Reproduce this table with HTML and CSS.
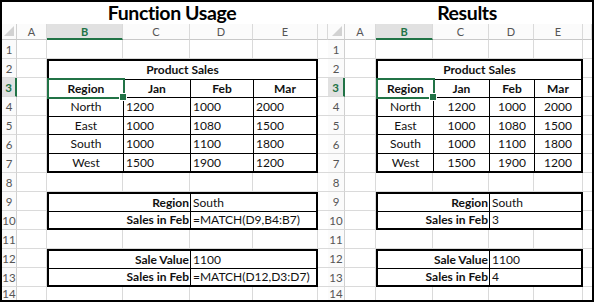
FILE: index.html
```html
<!DOCTYPE html>
<html>
<head>
<meta charset="utf-8">
<link rel="stylesheet" href="styles.css">
</head>
<body>
<div class="frame">
  <section class="panel panel-left">
    <h2 class="title">Function Usage</h2>
    <div class="sheet">
      <div class="corner"><svg width="10" height="10" viewBox="0 0 10 10"><polygon points="10,0 10,10 0,10" fill="#d2d2d2"/></svg></div>
      <div class="colheads">
        <div class="ch">A</div><div class="ch active">B</div><div class="ch">C</div><div class="ch">D</div><div class="ch">E</div><div class="ch"></div>
      </div>
      <div class="rowheads">
        <div class="rh">1</div><div class="rh">2</div><div class="rh active">3</div><div class="rh">4</div><div class="rh">5</div><div class="rh">6</div><div class="rh">7</div><div class="rh">8</div><div class="rh">9</div><div class="rh">10</div><div class="rh">11</div><div class="rh">12</div><div class="rh">13</div><div class="rh last">14</div>
      </div>
      <div class="body">
        <div class="tbl product">
          <div class="c th span-all">Product Sales</div>
          <div class="c th sel">Region</div><div class="c th">Jan</div><div class="c th">Feb</div><div class="c th">Mar</div>
          <div class="c ctr">North</div><div class="c num">1200</div><div class="c num">1000</div><div class="c num">2000</div>
          <div class="c ctr">East</div><div class="c num">1000</div><div class="c num">1080</div><div class="c num">1500</div>
          <div class="c ctr">South</div><div class="c num">1000</div><div class="c num">1100</div><div class="c num">1800</div>
          <div class="c ctr">West</div><div class="c num">1500</div><div class="c num">1900</div><div class="c num">1200</div>
        </div>
        <div class="tbl lookup lookup-a">
          <div class="c lbl">Region</div><div class="c val">South</div>
          <div class="c lbl">Sales in Feb</div><div class="c val">=MATCH(D9,B4:B7)</div>
        </div>
        <div class="tbl lookup lookup-b">
          <div class="c lbl">Sale Value</div><div class="c val">1100</div>
          <div class="c lbl">Sales in Feb</div><div class="c val">=MATCH(D12,D3:D7)</div>
        </div>
      </div>
    </div>
  </section>
  <section class="panel panel-right">
    <h2 class="title">Results</h2>
    <div class="sheet">
      <div class="corner"><svg width="10" height="10" viewBox="0 0 10 10"><polygon points="10,0 10,10 0,10" fill="#d2d2d2"/></svg></div>
      <div class="colheads">
        <div class="ch">A</div><div class="ch active">B</div><div class="ch">C</div><div class="ch">D</div><div class="ch">E</div><div class="ch"></div>
      </div>
      <div class="rowheads">
        <div class="rh">1</div><div class="rh">2</div><div class="rh active">3</div><div class="rh">4</div><div class="rh">5</div><div class="rh">6</div><div class="rh">7</div><div class="rh">8</div><div class="rh">9</div><div class="rh">10</div><div class="rh">11</div><div class="rh">12</div><div class="rh">13</div><div class="rh last">14</div>
      </div>
      <div class="body">
        <div class="tbl product">
          <div class="c th span-all">Product Sales</div>
          <div class="c th sel">Region</div><div class="c th">Jan</div><div class="c th">Feb</div><div class="c th">Mar</div>
          <div class="c ctr">North</div><div class="c ctr">1200</div><div class="c ctr">1000</div><div class="c ctr">2000</div>
          <div class="c ctr">East</div><div class="c ctr">1000</div><div class="c ctr">1080</div><div class="c ctr">1500</div>
          <div class="c ctr">South</div><div class="c ctr">1000</div><div class="c ctr">1100</div><div class="c ctr">1800</div>
          <div class="c ctr">West</div><div class="c ctr">1500</div><div class="c ctr">1900</div><div class="c ctr">1200</div>
        </div>
        <div class="tbl lookup lookup-a">
          <div class="c lbl">Region</div><div class="c val">South</div>
          <div class="c lbl">Sales in Feb</div><div class="c val">3</div>
        </div>
        <div class="tbl lookup lookup-b">
          <div class="c lbl">Sale Value</div><div class="c val">1100</div>
          <div class="c lbl">Sales in Feb</div><div class="c val">4</div>
        </div>
      </div>
    </div>
  </section>
</div>
</body>
</html>
```

FILE: styles.css
```css
* { box-sizing: border-box; }
html, body { margin: 0; padding: 0; background: #fff; }
body { font-family: Lato, "Open Sans", sans-serif; color: #000; }

.frame {
  width: 594px;
  height: 302px;
  border: 2px solid #000;
  display: flex;
  overflow: hidden;
  background: #fff;
}

.panel { display: flex; flex-direction: column; }
.panel-left { width: 326px; flex: none; }
.panel-right { flex: 1; min-width: 0; }

.title {
  margin: 0;
  height: 23px;
  line-height: 22px;
  font-size: 19.5px;
  font-weight: 700;
  text-align: center;
  padding-left: 14px;
  letter-spacing: -0.4px;
}

.sheet {
  flex: 1;
  display: grid;
  grid-template-rows: 16px 1fr;
}
.panel-left .sheet { grid-template-columns: 15px 1fr; }
.panel-right .sheet { grid-template-columns: 17px 1fr; }

.corner {
  background: #fbfbfb;
  border-right: 1px solid #d0d0d0;
  border-bottom: 1px solid #c8c8c8;
  display: flex;
  align-items: flex-end;
  justify-content: flex-end;
  padding: 0 2px 3px 0;
}
.corner svg { display: block; }

.colheads {
  display: grid;
  background: #fbfbfb;
}
.panel-left .colheads, .panel-left .body { grid-template-columns: 30px 76px 67px 63px 65px 1fr; }
.panel-right .colheads, .panel-right .body { grid-template-columns: 31px 57px 56px 45px 49px 1fr; }

.ch {
  border-right: 1px solid #dadada;
  border-bottom: 1px solid #c8c8c8;
  font-size: 11px;
  color: #555;
  display: flex;
  align-items: center;
  justify-content: center;
}
.ch.active {
  background: #e1e1e1;
  color: #217346;
  font-weight: 700;
  border-bottom: 2px solid #217346;
}

.rowheads {
  display: flex;
  flex-direction: column;
  background: #fbfbfb;
}
.rh {
  height: 19px;
  flex: none;
  border-right: 1px solid #d0d0d0;
  border-bottom: 1px solid #dadada;
  font-size: 11.5px;
  color: #555;
  display: flex;
  align-items: center;
  justify-content: center;
}
.rh.last { flex: 1; height: auto; border-bottom: none; }
.rh.active {
  background: #e1e1e1;
  color: #217346;
  font-weight: 700;
  border-right: 2px solid #217346;
}

.body {
  display: grid;
  grid-template-rows: repeat(13, 19px) 1fr;
}
.panel-left .body {
  background-image:
    linear-gradient(#dadada, #dadada), linear-gradient(#dadada, #dadada), linear-gradient(#dadada, #dadada),
    linear-gradient(#dadada, #dadada), linear-gradient(#dadada, #dadada),
    repeating-linear-gradient(to bottom, transparent 0 18px, #dadada 18px 19px);
  background-size: 1px 100%, 1px 100%, 1px 100%, 1px 100%, 1px 100%, 100% 100%;
  background-position: 29px 0, 105px 0, 172px 0, 235px 0, 300px 0, 0 0;
  background-repeat: no-repeat;
}
.panel-right .body {
  background-image:
    linear-gradient(#dadada, #dadada), linear-gradient(#dadada, #dadada), linear-gradient(#dadada, #dadada),
    linear-gradient(#dadada, #dadada), linear-gradient(#dadada, #dadada),
    repeating-linear-gradient(to bottom, transparent 0 18px, #dadada 18px 19px);
  background-size: 1px 100%, 1px 100%, 1px 100%, 1px 100%, 1px 100%, 100% 100%;
  background-position: 30px 0, 87px 0, 143px 0, 188px 0, 237px 0, 0 0;
  background-repeat: no-repeat;
}

.tbl {
  display: grid;
  border: 2px solid #000;
  background: #000;
  gap: 1px;
  grid-column: 2 / 6;
}
.product { grid-row: 2 / 8; grid-template-rows: repeat(6, 1fr); }
.panel-left .product { grid-template-columns: 74px 66px 62px 1fr; }
.panel-right .product { grid-template-columns: 55px 55px 44px 1fr; }
.lookup { grid-template-rows: 1fr 1fr; }
.lookup-a { grid-row: 9 / 11; }
.lookup-b { grid-row: 12 / 14; }
.panel-left .lookup { grid-template-columns: 141px 1fr; }
.panel-right .lookup { grid-template-columns: 111px 1fr; }

.c {
  background: #fff;
  font-size: 12px;
  color: #111;
  display: flex;
  align-items: center;
  white-space: nowrap;
  overflow: visible;
  padding: 0 2px;
}
.th { font-weight: 700; justify-content: center; }
.span-all { grid-column: 1 / -1; }
.ctr { justify-content: center; }
.num { justify-content: flex-start; }
.lbl { font-weight: 700; justify-content: flex-end; padding-right: 1px; }
.val { justify-content: flex-start; }

.sel {
  position: relative;
  z-index: 1;
  outline: 2px solid #217346;
  outline-offset: 0;
}
.sel::after {
  content: "";
  position: absolute;
  right: -4px;
  bottom: -4px;
  width: 6px;
  height: 6px;
  background: #217346;
  border: 1px solid #fff;
}
```
